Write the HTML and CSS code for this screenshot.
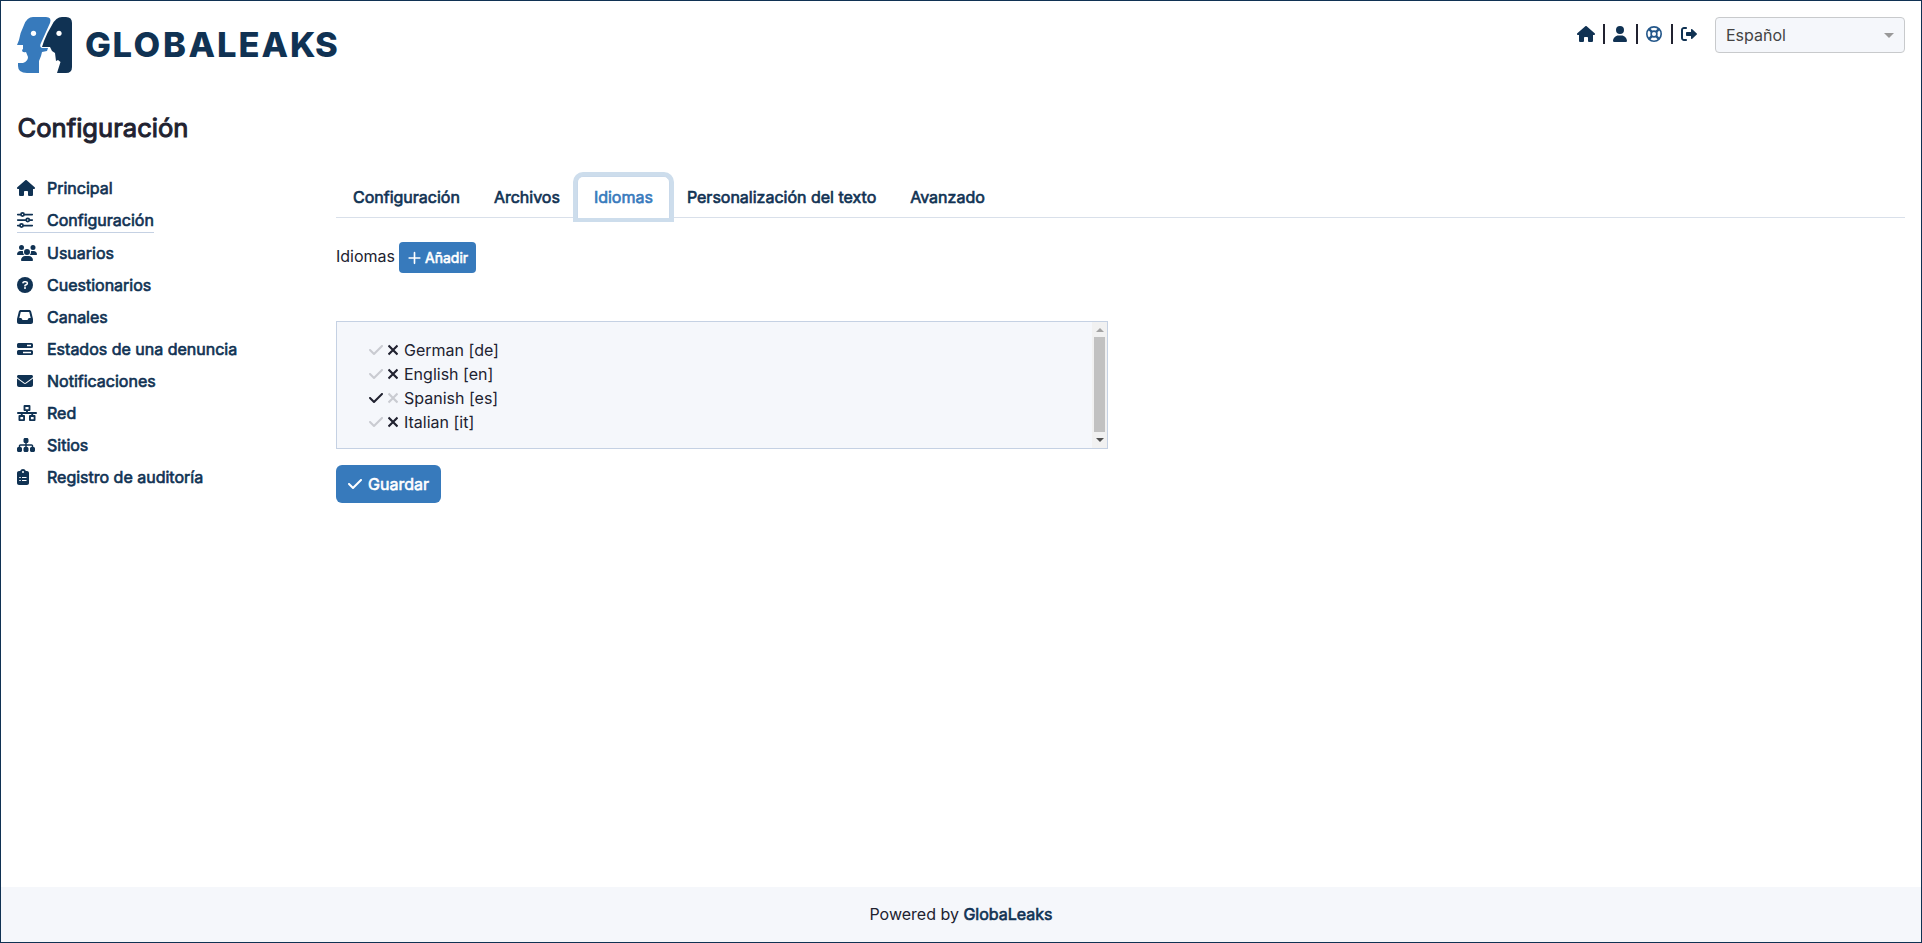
FILE: index.html
```html
<!DOCTYPE html>
<html lang="es">
<head>
<meta charset="utf-8">
<title>GlobaLeaks</title>
<link rel="stylesheet" href="styles.css">
</head>
<body>
<svg class="defs" width="0" height="0" aria-hidden="true">
  <symbol id="house" viewBox="0 0 576 512"><path d="M575.8 255.5c0 18-15 32.1-32 32.1h-32l.7 160.2c0 2.7-.2 5.4-.5 8.100V472c0 22.100-17.900 40-40 40H456c-1.100 0-2.200 0-3.300-.1c-1.400 .1-2.800 .1-4.200 .1H416 392c-22.100 0-40-17.900-40-40V448 384c0-17.700-14.300-32-32-32H256c-17.700 0-32 14.300-32 32v64 24c0 22.100-17.900 40-40 40H160 128.100c-1.500 0-3-.1-4.500-.2c-1.200 .1-2.400 .2-3.600 .2H104c-22.100 0-40-17.900-40-40V360c0-.9 0-1.900 .1-2.800V287.600H32c-18 0-32-14-32-32.100c0-9 3-17 10-24L266.400 8c7-7 15-8 22-8s15 2 21 7L564.800 231.500c8 7 12 15 11 24z"/></symbol>
  <symbol id="user" viewBox="0 0 448 512"><path d="M224 256A128 128 0 1 0 224 0a128 128 0 1 0 0 256zm-45.700 48C79.800 304 0 383.800 0 482.300C0 498.700 13.300 512 29.700 512H418.300c16.400 0 29.700-13.300 29.700-29.700C448 383.800 368.200 304 269.700 304H178.300z"/></symbol>
  <symbol id="ring" viewBox="0 0 512 512"><g fill="none" stroke="currentColor" stroke-width="52"><circle cx="256" cy="256" r="230"/><circle cx="256" cy="256" r="92"/><path d="M92 92L188 188M420 92L324 188M92 420L188 324M420 420L324 324" stroke-width="75"/></g></symbol>
  <symbol id="exit" viewBox="0 0 512 512"><path d="M160 96c17.700 0 32-14.300 32-32s-14.300-32-32-32H96C43 32 0 75 0 128V384c0 53 43 96 96 96h64c17.700 0 32-14.300 32-32s-14.300-32-32-32H96c-17.700 0-32-14.300-32-32V128c0-17.700 14.300-32 32-32h64zM504.500 273.400c4.800-4.500 7.500-10.800 7.500-17.400s-2.700-12.900-7.500-17.400l-144-136c-7-6.600-17.200-8.400-26-4.600s-14.500 12.500-14.500 22v72H192c-17.700 0-32 14.300-32 32v64c0 17.700 14.300 32 32 32H320v72c0 9.600 5.700 18.200 14.500 22s19 2 26-4.600l144-136z"/></symbol>
  <symbol id="sliders" viewBox="0 0 512 512"><g fill="none" stroke="currentColor" stroke-width="56" stroke-linecap="round"><path d="M24 80H112M240 80H488M24 256H280M408 256H488M24 432H80M208 432H488"/><circle cx="176" cy="80" r="50"/><circle cx="344" cy="256" r="50"/><circle cx="144" cy="432" r="50"/></g></symbol>
  <symbol id="users" viewBox="0 0 640 512"><path d="M144 0a80 80 0 1 1 0 160A80 80 0 1 1 144 0zM512 0a80 80 0 1 1 0 160A80 80 0 1 1 512 0zM0 298.700C0 239.800 47.800 192 106.700 192h42.700c15.900 0 31 3.500 44.600 9.700c-1.300 7.200-1.900 14.700-1.900 22.300c0 38.200 16.800 72.500 43.300 96H21.300C9.600 320 0 310.400 0 298.700zM405.300 320h-.7c26.600-23.500 43.300-57.800 43.300-96c0-7.600-.7-15-1.900-22.300c13.600-6.300 28.700-9.700 44.600-9.700h42.700C592.200 192 640 239.800 640 298.700c0 11.800-9.600 21.300-21.300 21.300H405.300zM224 224a96 96 0 1 1 192 0 96 96 0 1 1-192 0zM128 485.300C128 411.700 187.700 352 261.300 352H378.700C452.300 352 512 411.700 512 485.300c0 14.700-11.900 26.700-26.700 26.700H154.700c-14.700 0-26.700-11.900-26.700-26.700z"/></symbol>
  <symbol id="question" viewBox="0 0 512 512"><circle cx="256" cy="256" r="256"/><path d="M190 184q8-32 42-32h46c68 0 68 68 28 88l-50 30v20" fill="none" stroke="#fff" stroke-width="48" stroke-linecap="round"/><circle cx="256" cy="352" r="32" fill="#fff"/></symbol>
  <symbol id="inbox" viewBox="0 0 512 512"><path d="M121 32C91.600 32 66 52 58.900 80.500L1.900 308.400C.6 313.500 0 318.700 0 323.900V416c0 35.300 28.700 64 64 64H448c35.300 0 64-28.700 64-64V323.900c0-5.200-.6-10.400-1.900-15.500l-57-227.900C446 52 420.400 32 391 32H121zm0 64H391l48 192H387.800c-12.100 0-23.200 6.800-28.600 17.700l-14.300 28.600c-5.400 10.800-16.500 17.700-28.600 17.700H195.800c-12.100 0-23.200-6.800-28.600-17.700l-14.300-28.600c-5.400-10.800-16.500-17.700-28.600-17.700H73L121 96z"/></symbol>
  <symbol id="bars" viewBox="0 0 512 512"><path fill-rule="evenodd" d="M48 64H464Q512 64 512 112V176Q512 224 464 224H48Q0 224 0 176V112Q0 64 48 64ZM320 120V168H448V120ZM48 288H464Q512 288 512 336V400Q512 448 464 448H48Q0 448 0 400V336Q0 288 48 288ZM192 344V392H448V344Z"/></symbol>
  <symbol id="mail" viewBox="0 0 512 512"><path d="M48 64C21.500 64 0 85.500 0 112c0 15.100 7.100 29.300 19.200 38.400L236.800 313.600c11.400 8.500 27 8.500 38.400 0L492.800 150.400c12.100-9.100 19.200-23.300 19.200-38.400c0-26.500-21.500-48-48-48H48zM0 176V384c0 35.300 28.700 64 64 64H448c35.300 0 64-28.700 64-64V176L294.400 339.200c-22.800 17.100-54 17.100-76.800 0L0 176z"/></symbol>
  <symbol id="network" viewBox="0 0 640 512"><g fill="none" stroke="currentColor" stroke-width="60" stroke-linejoin="round" stroke-linecap="round"><path d="M240 30H400V162H240ZM78 350H226V482H78ZM414 350H562V482H414ZM30 256H610M320 170V256M152 256V340M488 256V340"/></g></symbol>
  <symbol id="sitemap" viewBox="0 0 576 512"><path d="M208 80c0-26.500 21.500-48 48-48h64c26.500 0 48 21.500 48 48v64c0 26.500-21.500 48-48 48h-8v40H464c30.900 0 56 25.100 56 56v32h8c26.500 0 48 21.500 48 48v64c0 26.500-21.500 48-48 48H464c-26.500 0-48-21.500-48-48V368c0-26.500 21.500-48 48-48h8V288c0-4.400-3.600-8-8-8H312v40h8c26.500 0 48 21.500 48 48v64c0 26.500-21.500 48-48 48H256c-26.500 0-48-21.500-48-48V368c0-26.500 21.500-48 48-48h8V280H112c-4.400 0-8 3.600-8 8v32h8c26.500 0 48 21.500 48 48v64c0 26.500-21.500 48-48 48H48c-26.500 0-48-21.500-48-48V368c0-26.500 21.500-48 48-48h8V288c0-30.900 25.100-56 56-56H264V192h-8c-26.500 0-48-21.500-48-48V80z"/></symbol>
  <symbol id="clipboard" viewBox="0 0 384 512"><path d="M192 0c-41.800 0-77.400 26.700-90.500 64H64C28.700 64 0 92.700 0 128V448c0 35.300 28.700 64 64 64H320c35.300 0 64-28.700 64-64V128c0-35.300-28.700-64-64-64H282.500C269.400 26.700 233.800 0 192 0z"/><circle cx="192" cy="96" r="32" fill="#fff"/><path d="M72 272H120M160 272H304M72 368H120M160 368H304" stroke="#fff" stroke-width="34"/></symbol>
  <symbol id="check" viewBox="0 0 448 512"><path d="M438.600 105.400c12.500 12.500 12.500 32.800 0 45.300l-256 256c-12.500 12.500-32.800 12.500-45.300 0l-128-128c-12.500-12.500-12.500-32.800 0-45.300s32.800-12.500 45.300 0L160 338.700 393.400 105.400c12.500-12.500 32.800-12.500 45.300 0z"/></symbol>
  <symbol id="xmark" viewBox="0 0 320 512"><path d="M40 136L280 376M280 136L40 376" stroke="currentColor" stroke-width="72" stroke-linecap="square"/></symbol>
  <symbol id="plus" viewBox="0 0 448 512"><path d="M224 60V452M28 256H420" stroke="currentColor" stroke-width="60" stroke-linecap="round"/></symbol>
</svg>
<div class="page">
  <header class="header">
    <svg class="logo" width="322" height="58" viewBox="0 0 322 58" role="img" aria-label="GlobaLeaks">
      <path class="face-light" d="M17 1H30Q36 1 34 7L25 27Q23 31 26 32H32L31 35L26 36L25 40L23 45V57H11Q2 57 2 50V47H7Q12 45 12 41L10 36Q6 37 6 34L7 33V29H1L3 24Q4 17 8 9Q11 1 17 1Z"/>
      <path class="face-dark" d="M46 1H50Q56 1 56 7V51Q56 57 50 57H41L44.500 46L42 44L40 45L39 37L36 35L34 31H26L28 25Q31 17 36 9Q40 1 46 1Z"/>
      <circle cx="17.500" cy="17.300" r="2.600" fill="#fff"/><circle cx="43" cy="17.300" r="2.600" fill="#fff"/>
      <text class="wordmark" y="41" x="69 96.500 117.500 147 172.500 201 222.500 245.500 274 299">GLOBALEAKS</text>
    </svg>
    <div class="tools">
      <nav class="quick">
        <svg class="ico w18"><use href="#house"/></svg><i class="bar"></i>
        <svg class="ico w14"><use href="#user"/></svg><i class="bar"></i>
        <svg class="ico w16 help"><use href="#ring"/></svg><i class="bar"></i>
        <svg class="ico w16"><use href="#exit"/></svg>
      </nav>
      <div class="select"><span>Español</span><i class="caret"></i></div>
    </div>
  </header>
  <h1 class="title">Configuración</h1>
  <div class="columns">
    <nav class="side">
      <a class="item"><svg class="ico w18"><use href="#house"/></svg><span>Principal</span></a>
      <a class="item active"><svg class="ico w16"><use href="#sliders"/></svg><span>Configuración</span></a>
      <a class="item"><svg class="ico w20"><use href="#users"/></svg><span>Usuarios</span></a>
      <a class="item"><svg class="ico w16"><use href="#question"/></svg><span>Cuestionarios</span></a>
      <a class="item"><svg class="ico w16"><use href="#inbox"/></svg><span>Canales</span></a>
      <a class="item"><svg class="ico w16"><use href="#bars"/></svg><span>Estados de una denuncia</span></a>
      <a class="item"><svg class="ico w16"><use href="#mail"/></svg><span>Notificaciones</span></a>
      <a class="item"><svg class="ico w20"><use href="#network"/></svg><span>Red</span></a>
      <a class="item"><svg class="ico w18"><use href="#sitemap"/></svg><span>Sitios</span></a>
      <a class="item"><svg class="ico w12"><use href="#clipboard"/></svg><span>Registro de auditoría</span></a>
    </nav>
    <main class="main">
      <div class="tabs">
        <a class="tab">Configuración</a><a class="tab">Archivos</a><a class="tab current">Idiomas</a><a class="tab">Personalización del texto</a><a class="tab">Avanzado</a>
      </div>
      <div class="add-row"><span>Idiomas</span><button class="btn small"><svg class="ico plus"><use href="#plus"/></svg>Añadir</button></div>
      <div class="list">
        <ul class="langs">
          <li><svg class="ico w14 off"><use href="#check"/></svg><svg class="ico w10"><use href="#xmark"/></svg><span>German [de]</span></li>
          <li><svg class="ico w14 off"><use href="#check"/></svg><svg class="ico w10"><use href="#xmark"/></svg><span>English [en]</span></li>
          <li><svg class="ico w14"><use href="#check"/></svg><svg class="ico w10 off"><use href="#xmark"/></svg><span>Spanish [es]</span></li>
          <li><svg class="ico w14 off"><use href="#check"/></svg><svg class="ico w10"><use href="#xmark"/></svg><span>Italian [it]</span></li>
        </ul>
        <div class="scroll"><i class="up"></i><i class="thumb"></i><i class="down"></i></div>
      </div>
      <button class="btn save"><svg class="ico w14"><use href="#check"/></svg>Guardar</button>
    </main>
  </div>
  <footer class="footer"><span>Powered by <b>GlobaLeaks</b></span></footer>
</div>
</body>
</html>
```
FILE: styles.css
```css
* { box-sizing: border-box; }
body { margin: 0; font: 16px/24px Inter, sans-serif; color: #212230; background: #fff; }
.defs { position: absolute; }
.page { height: 943px; border: 1px solid #103253; display: flex; flex-direction: column; }
.header { height: 89px; padding: 15px 16px 0 15px; display: flex; justify-content: space-between; align-items: flex-start; }
.logo { display: block; }
.face-light { fill: #377abc; }
.face-dark, .wordmark { fill: #103253; }
.wordmark { font: 800 34.500px Inter, sans-serif; }
.ico { height: 16px; fill: currentColor; flex: none; display: block; overflow: visible; }
.w10 { width: 10px; } .w12 { width: 12px; } .w14 { width: 14px; } .w16 { width: 16px; } .w18 { width: 18px; } .w20 { width: 20px; }
.tools { display: flex; gap: 18px; }
.quick { display: flex; align-items: center; gap: 8.400px; height: 36px; color: #103253; }
.help { color: #24578a; }
.bar { width: 2px; height: 20px; margin-top: -1px; background: #212230; }
.select { width: 190px; height: 36px; margin-top: 1px; padding: 0 10px; border: 1px solid #c8cacc; border-radius: 4px; background: #f5f7fb; color: #444; display: flex; align-items: center; justify-content: space-between; }
.caret { border: 5px solid transparent; border-top-color: #999; border-bottom: 0; }
.title { margin: 22px 0 0 16.500px; font-size: 25.600px; line-height: 31px; font-weight: 400; -webkit-text-stroke: 1px; }
.columns { flex: 1; display: flex; }
.side { width: 319px; padding: 28px 0 0 16px; display: flex; flex-direction: column; align-items: flex-start; }
.item { height: 32px; padding-top: 2px; display: flex; align-items: center; color: #103253; -webkit-text-stroke: .65px; }
.item .ico { stroke-width: 0; }
.item .w18 { margin-right: 12px; } .item .w16 { margin-right: 14px; } .item .w20 { margin-right: 10px; } .item .w12 { margin-right: 18px; }
.active { border-bottom: 1px solid #c5d1e3; height: 30px; padding: 5px 0 0; margin-bottom: 3px; }
.main { flex: 1; padding: 32px 16px 0 16px; }
.tabs { display: flex; height: 43px; border-bottom: 1px solid #d9e0ea; }
.tab { height: 43px; padding: 10px 17px; color: #103253; -webkit-text-stroke: .65px; }
.current { height: 42px; color: #377abc; background: #fff; border: 1px solid #c9d9ea; border-bottom: 0; border-radius: 6px 6px 0 0; box-shadow: 0 0 0 4px #cdddec; margin: 1px 0 0; padding: 8px 16px; }
.add-row { display: flex; align-items: flex-start; gap: 4px; margin-top: 24px; }
.add-row span { margin-top: 2px; }
.btn { display: flex; align-items: center; border: 0; color: #fff; background: #377abc; font-family: Inter, sans-serif; -webkit-text-stroke: .6px; }
.small { width: 77px; height: 31px; padding: 0 9px; border-radius: 4px; font-size: 14px; gap: 4px; }
.plus { width: 13px; height: 14px; stroke-width: 0; }
.list { width: 772px; height: 128px; margin-top: 48px; border: 1px solid #c5d1e3; background: #f5f7fb; display: flex; justify-content: space-between; }
.langs { list-style: none; margin: 0; padding: 16px 0 0 32px; }
.langs li { display: flex; align-items: center; height: 24px; gap: 5px; }
.langs span { margin-left: 1px; }
.off { opacity: .2; }
.scroll { width: 15px; background: #f1f1f1; display: flex; flex-direction: column; align-items: center; }
.up, .down { border: 4px solid transparent; }
.up { margin-top: 6px; border-top: 0; border-bottom-color: #a3a3a3; }
.down { margin-top: 6px; border-bottom: 0; border-top-color: #505050; }
.thumb { width: 11px; height: 95px; margin-top: 5px; background: #c1c1c1; }
.save { height: 38px; width: 105px; margin-top: 16px; padding: 0 12px; border-radius: 6px; font-size: 16px; gap: 6px; }
.save .ico { stroke-width: 0; }
.footer { height: 55px; padding-bottom: 2px; background: #f5f7fb; display: flex; align-items: center; justify-content: center; }
.footer b { font-weight: 400; color: #103253; -webkit-text-stroke: .65px; }
```
